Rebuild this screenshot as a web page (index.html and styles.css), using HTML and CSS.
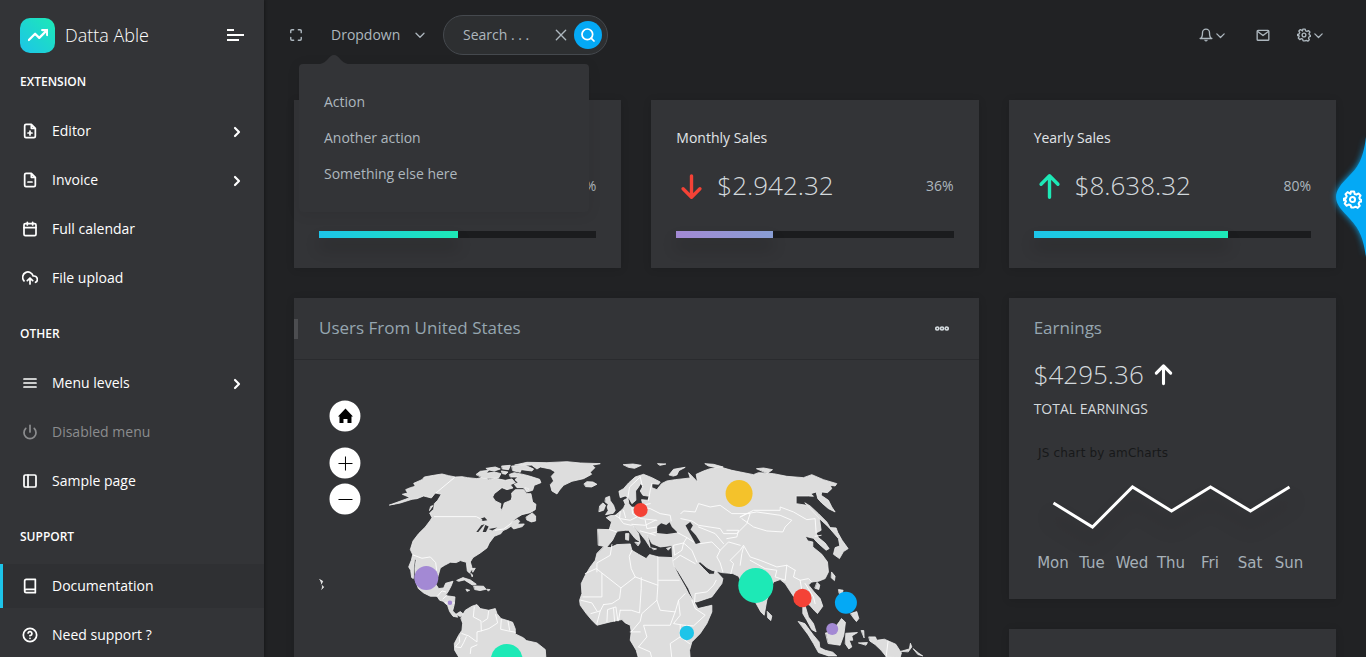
FILE: index.html
```
<!DOCTYPE html>
<html lang="en">
<head>
<meta charset="utf-8">
<title>Datta Able</title>
<link rel="stylesheet" href="styles.css">
</head>
<body>
<svg class="defs" width="0" height="0">
  <symbol id="chev" viewBox="0 0 24 24"><path d="M9 18l6-6-6-6"/></symbol>
  <symbol id="down" viewBox="0 0 24 24"><path d="M4 8.500l8 8 8-8"/></symbol>
  <symbol id="gear" viewBox="0 0 24 24"><circle cx="12" cy="12" r="3.2"/><path d="M10 2h4l.8 3 2.200.9 2.600-1.500 2.500 2.600-1.500 2.700.8 2.200 1.600.6v2l-2.400.8-.9 2.200 1.400 2.500-2.500 2.600-2.700-1.500-2.100.9L13.500 22h-3L9.600 19.200l-2.200-.9-2.700 1.500-2.500-2.600 1.500-2.700-.8-2.100L1 13v-2l2.800-1 .9-2.200-1.500-2.500 2.600-2.600 2.600 1.500L9.400 5z"/></symbol>
</svg>
<div class="app">
  <nav class="sidebar">
    <div class="brand">
      <span class="logo"><svg class="ic" viewBox="0 0 24 24"><path d="M23 6l-9.500 9.500-5-5L1 18M17 6h6v6"/></svg></span>
      <span class="name">Datta Able</span>
      <span class="burger"><i></i><i></i><i></i></span>
    </div>
    <div class="caption">EXTENSION</div>
    <a class="item"><svg class="ic" viewBox="0 0 24 24"><path d="M14 2H6a2 2 0 0 0-2 2v16a2 2 0 0 0 2 2h12a2 2 0 0 0 2-2V8zM14 2v6h6M12 18v-6M9 15h6"/></svg><span>Editor</span><svg class="arrow"><use href="#chev"/></svg></a>
    <a class="item"><svg class="ic" viewBox="0 0 24 24"><path d="M14 2H6a2 2 0 0 0-2 2v16a2 2 0 0 0 2 2h12a2 2 0 0 0 2-2V8zM14 2v6h6M9 15h6"/></svg><span>Invoice</span><svg class="arrow"><use href="#chev"/></svg></a>
    <a class="item"><svg class="ic" viewBox="0 0 24 24"><rect x="3" y="4" width="18" height="18" rx="2"/><path d="M16 2v4M8 2v4M3 10h18"/></svg><span>Full calendar</span></a>
    <a class="item"><svg class="ic" viewBox="0 0 24 24"><path d="M16 16l-4-4-4 4M12 12v9M20.390 18.390A5 5 0 0 0 18 9h-1.260A8 8 0 1 0 3 16.300"/></svg><span>File upload</span></a>
    <div class="caption">OTHER</div>
    <a class="item"><svg class="ic" viewBox="0 0 24 24"><path d="M3 12h18M3 6h18M3 18h18"/></svg><span>Menu levels</span><svg class="arrow"><use href="#chev"/></svg></a>
    <a class="item disabled"><svg class="ic" viewBox="0 0 24 24"><path d="M18.360 6.640a9 9 0 1 1-12.730 0M12 2v10"/></svg><span>Disabled menu</span></a>
    <a class="item"><svg class="ic" viewBox="0 0 24 24"><rect x="3" y="3" width="18" height="18" rx="2"/><path d="M9 3v18"/></svg><span>Sample page</span></a>
    <div class="caption">SUPPORT</div>
    <a class="item active"><svg class="ic" viewBox="0 0 24 24"><path d="M4 19.500A2.500 2.500 0 0 1 6.500 17H20M6.500 2H20v20H6.500A2.500 2.500 0 0 1 4 19.500v-15A2.500 2.500 0 0 1 6.500 2z"/></svg><span>Documentation</span></a>
    <a class="item"><svg class="ic" viewBox="0 0 24 24"><circle cx="12" cy="12" r="10"/><path d="M9.090 9a3 3 0 0 1 5.830 1c0 2-3 3-3 3M12 17h.01"/></svg><span>Need support ?</span></a>
  </nav>
  <div class="page">
    <header class="topbar">
      <svg class="max" viewBox="0 0 24 24"><path d="M8 3H5a2 2 0 0 0-2 2v3M21 8V5a2 2 0 0 0-2-2h-3M16 21h3a2 2 0 0 0 2-2v-3M3 16v3a2 2 0 0 0 2 2h3"/></svg>
      <div class="drop"><span>Dropdown</span><svg class="caret"><use href="#down"/></svg>
        <div class="menu">
          <svg class="tip" viewBox="0 0 28 9"><path d="M0 9C7 8 9 0 14 0s7 8 14 9z"/></svg>
          <a>Action</a><a>Another action</a><a>Something else here</a>
        </div>
      </div>
      <div class="search"><span>Search . . .</span><svg class="close" viewBox="0 0 24 24"><path d="M20 4L4 20M4 4l16 16"/></svg><span class="go"><svg viewBox="0 0 24 24"><circle cx="11" cy="11" r="8"/><path d="M21 21l-4.350-4.350"/></svg></span></div>
      <div class="tools">
        <span class="tool bell"><svg class="ti" viewBox="0 0 24 24"><path d="M18 8A6 6 0 0 0 6 8c0 7-1 9-4 10h20c-3-1-4-3-4-10M13.730 21a2 2 0 0 1-3.460 0"/></svg><svg class="tc"><use href="#down"/></svg></span>
        <span class="tool mail"><svg class="ti" viewBox="0 0 24 24"><rect x="2" y="4" width="20" height="17" rx="1.500"/><path d="M3 6l9 7 9-7"/></svg></span>
        <span class="tool"><svg class="ti"><use href="#gear"/></svg><svg class="tc"><use href="#down"/></svg></span>
      </div>
    </header>
    <main class="grid">
      <section class="card stat">
        <h6></h6>
        <div class="row"><span class="pct">67%</span></div>
        <div class="bar"><div class="fill teal" style="width:50%"></div></div>
      </section>
      <section class="card stat">
        <h6>Monthly Sales</h6>
        <div class="row"><svg class="arr dn" viewBox="0 0 24 24"><path d="M12 2.500v18.500M4.500 14l7.500 7.500 7.500-7.500"/></svg><span class="sum">$2.942.32</span><span class="pct">36%</span></div>
        <div class="bar"><div class="fill violet" style="width:35%"></div></div>
      </section>
      <section class="card stat">
        <h6>Yearly Sales</h6>
        <div class="row"><svg class="arr up" viewBox="0 0 24 24"><path d="M12 21.500V3M4.500 10L12 2.500l7.500 7.500"/></svg><span class="sum">$8.638.32</span><span class="pct">80%</span></div>
        <div class="bar"><div class="fill teal" style="width:70%"></div></div>
      </section>
      <section class="card users">
        <div class="head"><h5>Users From United States</h5><svg class="dots" viewBox="0 0 14 5"><circle cx="2.300" cy="2.500" r="1.500"/><circle cx="7" cy="2.500" r="1.500"/><circle cx="11.700" cy="2.500" r="1.500"/></svg></div>
        <svg class="map" viewBox="294 360 685 297">
          <g transform="translate(380.400 450.300) scale(.33333)">
            <g class="land">
              <path d="M28 164L75 147L88 142L80 138L66 132L82 128L76 118L90 112L105 108L100 99L125 88L132 80L160 75L185 71L205 76L225 80L245 79L262 82L290 85L310 80L325 88L345 84L375 90L395 86L405 97L390 103L398 113L380 118L365 112L342 130L337 140L345 152L362 160L360 172L365 181L372 158L392 150L395 140L394 128L405 118L430 118L440 130L452 130L457 155L467 162L465 178L450 187L425 193L412 201L392 216L412 207L418 213L412 222L432 221L426 229L400 236L392 228L380 236L368 241L362 250L342 258L327 278L320 293L300 308L278 322L270 335L275 352L268 369L261 362L258 336L240 331L228 337L210 336L193 345L180 353L174 375L165 400L175 415L190 413L196 399L218 393L212 408L203 425L195 436L224 440L222 462L217 482L227 492L240 484L250 492L240 499L228 493L232 501L218 498L208 484L202 466L188 453L178 450L170 438L150 438L130 428L114 415L105 390L104 355L107 330L103 322L101 345L99 385L94 382L91 360L85 350L93 330L97 313L90 298L98 272L115 250L135 230L150 210L155 202L148 188L160 177L162 160L172 150L183 132L165 128L153 143L130 137L110 145L95 147L60 158Z"/>
              <path d="M404 44L440 36L500 37L560 34L600 38L660 40L635 45L644 52L630 66L634 72L610 85L575 93L550 105L538 119L530 131L515 122L510 103L520 92L513 78L525 65L510 56L480 50L470 56L455 45Z"/>
              <path d="M288 72L300 63L325 60L318 69L342 65L362 70L355 83L330 84L310 84ZM318 54L345 50L360 56L342 62L325 59ZM365 47L390 45L385 58L367 56ZM395 47L435 45L460 56L455 62L423 58L420 66L398 61ZM388 72L402 67L432 73L450 78L478 87L482 97L462 105L457 120L440 125L429 112L410 112L402 102L414 97L404 88L413 80L391 80ZM435 112L447 116L440 121ZM364 62L383 65L376 72L367 70ZM438 200L456 188L466 197L466 212L453 215L440 209ZM230 390L248 382L270 389L288 402L276 404L252 389L236 393ZM281 407L310 408L317 417L299 421L284 418ZM258 417L268 420L261 423ZM320 417L329 418L325 422ZM273 355L285 354L278 365ZM272 370L277 374L276 379ZM152 168L158 166L148 180Z"/>
              <path d="M242 503L255 480L275 468L290 463L300 475L325 480L345 475L350 490L362 505L382 511L397 516L405 536L405 551L430 563L438 571L470 578L495 598L497 625L238 625L223 600L222 580L235 555L245 540L247 520Z"/>
              <path d="M612 100L620 94L638 95L650 102L634 110L617 109ZM730 43L758 41L783 45L763 54L745 51ZM833 40L857 41L840 45ZM867 73L880 57L902 53L915 51L896 61L890 74L880 77ZM975 40L1000 42L1029 50L1010 52L985 47ZM677 142L688 138L690 151L700 165L705 180L699 189L676 193L684 181L681 170L684 162L675 155ZM659 166L668 158L676 165L670 180L657 184Z"/>
              <g transform="translate(540 0)">
                <path d="M130 290L150 292L170 283L210 281L215 300L235 312L258 325L268 313L295 320L337 322L341 347L355 375L375 410L385 430L405 460L413 475L455 465L455 485L440 520L420 550L395 575L388 600L390 625L235 625L228 600L210 570L213 545L210 525L195 518L185 508L150 515L110 525L95 510L78 490L60 465L58 450L65 430L63 400L75 375L90 350L105 330L110 310Z"/>
                <path d="M113 237L147 238L154 215L138 202L150 196L165 195L180 183L190 173L195 162L190 150L203 143L206 161L215 171L240 170L247 160L244 148L263 150L267 138L248 135L240 122L249 106L241 100L235 110L226 122L227 150L215 160L207 145L195 137L180 142L176 123L190 115L205 98L225 80L250 72L275 82L300 95L295 102L275 100L275 112L290 118L304 100L320 92L345 88L390 83L385 67L400 82L412 95L408 72L430 62L450 55L480 50L515 60L540 65L580 73L595 67L640 70L680 78L730 82L755 73L790 88L830 100L825 107L810 105L815 115L802 127L785 125L783 135L805 150L815 170L825 185L805 175L785 158L773 145L768 125L752 130L760 138L745 137L708 137L708 160L740 165L760 180L778 205L783 240L768 248L775 262L795 278L807 295L798 300L783 287L770 275L760 264L735 258L743 272L758 275L758 290L785 312L802 335L805 365L795 385L775 393L755 395L745 404L762 425L780 445L788 468L772 490L762 480L748 464L733 460L745 500L760 520L768 545L755 538L740 510L728 490L728 470L715 450L700 438L688 420L675 400L660 388L640 395L620 450L612 495L602 485L588 460L560 425L535 378L518 370L485 367L455 360L440 352L420 335L413 337L430 355L447 372L462 372L465 360L488 385L485 400L455 440L410 455L402 455L385 415L355 365L340 345L337 322L335 286L300 290L275 280L262 255L270 292L256 270L240 250L215 222L235 250L240 275L225 265L205 240L195 240L170 243L157 270L140 290L115 285Z"/>
                <path d="M225 276L240 277L234 286ZM197 250L206 250L205 270L197 268ZM275 293L289 296L281 298ZM320 294L332 291L325 299Z"/>
              </g>
              <g transform="translate(1080 0)">
                <path d="M50 55L70 53L97 58L82 69ZM195 158L210 167L235 190L260 215L270 232L288 233L293 247L306 270L324 295L310 304L298 325L280 312L285 292L299 287L295 265L278 245L265 230L240 207L215 180ZM275 366L285 378L283 391L274 383ZM231 397L239 404L236 418L225 414ZM82 484L95 497L92 511L83 503ZM175 514L194 520L220 555L237 575L239 592L255 600L278 606L290 617L265 617L235 607L220 580L205 555ZM257 548L275 545L298 514L304 505L316 516L311 555L300 585L265 580ZM296 418L309 420L305 433L298 430ZM332 490L350 484L356 505L349 514L340 503ZM318 549L352 547L335 557L338 570L327 570L335 590L326 596L316 581ZM364 541L371 541L372 562ZM356 578L382 577L378 584ZM387 560L406 560L410 570L433 567L467 582L484 608L480 622L440 621L423 600L405 583L390 573ZM484 603L508 596L511 579L515 590L505 604ZM520 596L536 609L548 617L534 613Z"/>
              </g>
              <path d="M-182 388l9 5-4 8M-175 406l5 4-6 7"/>
            </g>
            <g class="sea">
              <path d="M300 205l13-4 8 9-14 2zM288 245l15-20 10-3-19 23zM307 245l8-21 10 5-8 16zM325 236l26-4-15 9z"/>
              <g transform="translate(540 0)"><path d="M290 248L291 229L303 219L318 224L328 216L335 230L352 247L320 251ZM376 226L390 215L398 226L391 238L407 255L421 277L407 281L389 250Z"/></g>
            </g>
            <g class="border">
              <path d="M167 128L222 82M162 199H288L305 208M345 240L370 236L393 219M98 314L125 324L150 320L166 337L169 360M171 438L185 422L196 425M188 446L200 435M195 458L222 458M282 470L279 500L302 512L303 542L326 535L352 518L346 493M245 550L265 557L290 575L290 545L303 542M237 560L238 575L225 590L242 592L250 577L258 560M270 610L272 592L290 584M363 508L361 537L383 542L405 546M383 512L388 540M325 482L322 505L307 515"/>
              <g transform="translate(540 0)"><path d="M155 283L150 315L110 338V365M75 370L108 355L182 413L225 380L213 355L207 318L215 300M125 370V440H68M225 380L293 405V320M295 390H357M182 413L178 445L155 460L130 463M243 382V415L238 488L213 480H180M293 405L290 450L245 490L240 513L213 545M290 450L300 480L345 485L355 450L375 430M345 485L330 525L250 525L260 560L235 590M355 450L360 495L340 520L370 525L400 527L435 495L405 475L395 450M360 525L360 560L330 580L335 625M360 560L388 580M130 463L120 482L92 490M120 482L110 520M140 515L142 478L167 470L173 512M160 475L163 513M62 450L95 458L110 482M180 480L175 510M235 590L270 605L275 625M210 545L240 545M148 238L170 245M180 183L178 205L190 220L213 225M165 195L180 205L210 210L230 200M190 180L196 202M215 171L217 190L242 205L290 210M245 170L270 175L300 190L330 195L333 212M265 150L270 120L275 100M203 140L208 110L240 80M240 80L247 110M245 165L270 160M255 210L260 235L290 230M215 222L255 225L285 210M240 242L270 250L290 245M285 255L270 250M352 247L380 262L370 278L340 285L343 315L365 300L370 278L395 300L410 335M340 330L360 315L405 340M403 457L405 430L440 425L460 405L468 390M380 262L400 275M420 280L455 275L480 300L470 320L480 338L488 365M480 300L505 275L540 285M362 190L370 182L405 185L415 160L450 170L480 165L515 190L570 190L560 220L530 250L490 250L480 235L415 225L395 212L362 205M415 230L465 250L490 280M500 265L530 260L535 240L500 240M512 370L520 340L510 330L540 300L550 285L570 320L600 330L650 350L680 345L705 360M540 200L560 190L590 185L660 195L695 210L675 230L668 245L620 242L580 230L545 205M540 200L580 180L660 180L660 170L700 185L740 208L765 205L768 248M550 290L545 310L540 345M570 330L615 355L650 360L645 380L675 390L680 345M705 360L700 380L720 390L745 385L755 395M720 390L725 420M735 400L760 440L765 460M765 258L783 255"/></g>
              <path d="M1524 573L1518 620"/>
            </g>
          </g>
          <g>
            <circle cx="426.400" cy="578" r="12" fill="#a389d4"/><circle cx="450" cy="602.800" r="2.300" fill="#a389d4"/>
            <circle cx="506.800" cy="660" r="16" fill="#1de9b6"/><circle cx="640.800" cy="510" r="7" fill="#f44236"/>
            <circle cx="739.300" cy="493.500" r="13.500" fill="#f4c22b"/><circle cx="687" cy="633" r="7.200" fill="#1dc4e9"/>
            <circle cx="756" cy="585.500" r="17.500" fill="#1de9b6"/><circle cx="802.700" cy="598" r="9.200" fill="#f44236"/>
            <circle cx="846.200" cy="602.700" r="11" fill="#04a9f5"/><circle cx="832.500" cy="629" r="6" fill="#a389d4"/>
          </g>
          <g fill="#fff"><circle cx="345" cy="416" r="15.500"/><circle cx="345" cy="463" r="15.500"/><circle cx="345" cy="499" r="15.500"/></g>
          <path d="M345.500 408.500l7.500 8h-1.500v6.500h-4v-4h-4v4h-4v-6.500H338z"/>
          <path class="sign" d="M338.500 463.500h14M345.500 456.500v14M338.500 499.500h14"/>
        </svg>
      </section>
      <section class="card earn">
        <h5>Earnings</h5>
        <div class="total"><span>$4295.36</span><svg viewBox="0 0 24 24"><path d="M12 21.500V3M4.500 10.500L12 3l7.500 7.500"/></svg></div>
        <div class="label">TOTAL EARNINGS</div>
        <svg class="chart" viewBox="1009 430 327 169">
          <text class="credit" x="1038" y="457" textLength="130">JS chart by amCharts</text>
          <path class="shade" d="M1053.500 518L1092.500 542L1132.500 502L1171.500 526L1210.500 502L1250.500 526L1289.500 502"/>
          <path class="line" d="M1053.500 503L1092.500 527L1132.500 487L1171.500 511L1210.500 487L1250.500 511L1289.500 487"/>
          <g class="days"><text x="1053" y="568">Mon</text><text x="1092" y="568">Tue</text><text x="1132" y="568">Wed</text><text x="1171" y="568">Thu</text><text x="1210" y="568">Fri</text><text x="1250" y="568">Sat</text><text x="1289" y="568">Sun</text></g>
        </svg>
      </section>
      <section class="card next"></section>
    </main>
  </div>
  <div class="styler"><svg class="bump" viewBox="0 0 30 120"><path d="M30 0C27 24 21 31 13 39C5 47 0 53 0 60C0 68 6 73 14 82C22 91 27 98 30 120Z"/></svg><svg class="cog"><use href="#gear"/></svg></div>
</div>
</body>
</html>
```
FILE: styles.css
```
* { box-sizing: border-box; }
body { margin: 0; height: 657px; overflow: hidden; background: #212224; color: #adb7be; font: 14px/21px "Open Sans", "Noto Sans", sans-serif; }
h5, h6 { margin: 0; font-weight: 400; }
svg { fill: none; stroke: currentColor; stroke-width: 2; stroke-linecap: round; stroke-linejoin: round; flex: none; }
.defs { position: absolute; }
.app { display: flex; height: 657px; position: relative; overflow: hidden; }

.sidebar { width: 264px; flex: none; background: #333437; color: #fff; box-shadow: 1px 0 3px rgba(0,0,0,.3); }
.brand { height: 53px; padding: 18px 20px 0; display: flex; align-items: center; }
.logo { width: 35px; height: 35px; border-radius: 10px; background: linear-gradient(-135deg, #1de9b6, #1dc4e9); display: grid; place-items: center; }
.logo svg { width: 20px; height: 20px; margin-bottom: 2px; stroke-width: 2.700; }
.name { margin-left: 10px; font-size: 18px; font-weight: 300; }
.burger { margin: -2px 0 0 auto; width: 17px; display: flex; flex-direction: column; gap: 3px; }
.burger i { height: 2px; background: #fff; width: 17px; }
.burger i:first-child { width: 7px; }
.burger i:last-child { width: 12px; }
.caption { height: 56px; padding-left: 20px; line-height: 58px; font-size: 12px; font-weight: 600; }
.item { display: flex; align-items: center; height: 44px; margin-bottom: 5px; padding: 0 20px; }
.item span { margin-top: -2px; font-weight: 430; }
.item .ic { width: 16px; height: 16px; margin: 0 14px 0 2px; stroke-width: 2.600; }
.arrow { width: 16px; height: 16px; margin: 1px -1px 0 auto; stroke-width: 3.200; }
.disabled { color: #8b8c8e; }
.active { background: #2f3033; border-left: 3px solid #1dc4e9; padding-left: 17px; }

.page { flex: 1; min-width: 0; }
.topbar { height: 70px; padding: 0 42px 0 25px; display: flex; align-items: center; }
.max { width: 14px; height: 14px; stroke-width: 2.400; }
.drop { position: relative; display: flex; align-items: center; margin: -2px 0 0 28px; }
.drop > span { width: 83px; }
.caret { width: 12px; height: 12px; margin-top: 2px; stroke-width: 2.600; }
.menu { position: absolute; z-index: 5; left: -32px; top: 40px; width: 290px; height: 148px; padding: 20px 25px; background: #333437; border-radius: 4px; box-shadow: 0 2px 14px rgba(0,0,0,.08); }
.menu a { display: block; height: 36px; line-height: 36px; }
.tip { position: absolute; left: 21px; top: -9px; width: 28px; height: 9px; fill: #333437; stroke: none; }
.search { display: flex; align-items: center; width: 165px; height: 40px; margin-left: 17px; padding: 0 5px 0 19px; border: 1px solid #45494e; border-radius: 20px; background: #2d2f31; }
.search > span:first-child { width: 91px; margin-top: -2px; }
.close { width: 14px; height: 14px; stroke-width: 2.300; }
.go { width: 28px; height: 28px; margin-left: 6px; border-radius: 50%; background: #04a9f5; color: #fff; display: grid; place-items: center; }
.go svg { width: 16px; height: 16px; stroke-width: 2.600; }
.tools { margin: -1px 0 0 auto; display: flex; align-items: center; }
.tool { display: flex; align-items: center; }
.bell { margin-right: 30px; }
.mail { margin-right: 27px; }
.ti { width: 14px; height: 14px; stroke-width: 2.300; }
.tc { width: 11px; height: 11px; margin: 1px 0 0 2px; stroke-width: 2.800; }

.grid { display: grid; grid-template-columns: repeat(3, 1fr); grid-template-rows: 168px 301px 200px; gap: 30px; padding: 30px 30px 0; }
.card { background: #333437; box-shadow: 0 1px 8px rgba(0,0,0,.12); min-width: 0; }
.stat { padding: 27px 25px 0; }
.stat h6 { height: 22px; color: #e1e5e8; font-size: 14px; line-height: 22px; }
.row { display: flex; align-items: center; height: 40px; margin-top: 17px; }
.arr { width: 27px; height: 27px; margin: 0 12px 0 2px; stroke-width: 3; }
.up { color: #1de9b6; }
.dn { color: #f44236; }
.sum { margin-top: -2px; font-size: 26px; font-weight: 300; color: #d3d9dd; }
.pct { margin: -2px 0 0 auto; }
.bar { height: 7px; margin-top: 25px; background: #1b1c1e; }
.fill { height: 7px; box-shadow: 0 10px 15px rgba(0,0,0,.22); }
.teal { background: linear-gradient(90deg, #1dc4e9, #1de9b6); }
.violet { background: linear-gradient(90deg, #a389d4, #899ed4); }
.users { grid-column: span 2; grid-row: span 2; }
.head { height: 62px; display: flex; align-items: center; border-bottom: 1px solid #2a2b2e; padding-right: 30px; }
.head::before { content: ""; width: 4px; height: 20px; background: #4c4d50; margin-right: 21px; }
.head h5 { margin-top: -2px; }
.users h5, .earn h5 { font-size: 17px; color: #96a6b0; }
.dots { width: 14px; height: 5px; margin-left: auto; color: #d3d9dd; stroke-width: 1.700; }
.map { display: block; width: 100%; height: 297px; stroke: none; overflow: hidden; fill: #000; }
.land { fill: #ddd; stroke: #f0f0f0; stroke-width: 2.400; }
.sea { fill: #333437; }
.border { fill: none; stroke: #fff; stroke-width: 2.600; }
.sign { stroke: #000; stroke-width: 1; stroke-linecap: butt; }
.earn { padding-top: 18px; }
.earn h5 { height: 24px; line-height: 24px; margin-left: 25px; }
.total { display: flex; align-items: center; height: 40px; margin: 14px 25px 0; font-size: 26px; font-weight: 300; color: #d3d9dd; }
.total svg { width: 23px; height: 23px; margin-left: 8px; color: #fff; stroke-width: 3.200; }
.label { height: 36px; padding: 4px 25px; color: #d3d9dd; }
.chart { display: block; width: 327px; height: 169px; stroke: none; }
.credit { font: 12px "DejaVu Sans", sans-serif; fill: #18191a; }
.line { stroke: #fff; stroke-width: 3; stroke-linecap: butt; stroke-linejoin: miter; }
.shade { stroke: #222; stroke-width: 8; opacity: .18; filter: blur(8px); }
.days { font: 15px "DejaVu Sans", sans-serif; fill: #a6b0b7; text-anchor: middle; }

.styler { position: absolute; right: 0; top: 137px; width: 30px; height: 120px; color: #fff; }
.bump { display: block; width: 30px; height: 120px; fill: #04a9f5; stroke: none; overflow: visible; filter: drop-shadow(0 0 3px #04a9f5); }
.cog { position: absolute; left: 7px; top: 53px; width: 19px; height: 19px; stroke-width: 2.600; }
```
